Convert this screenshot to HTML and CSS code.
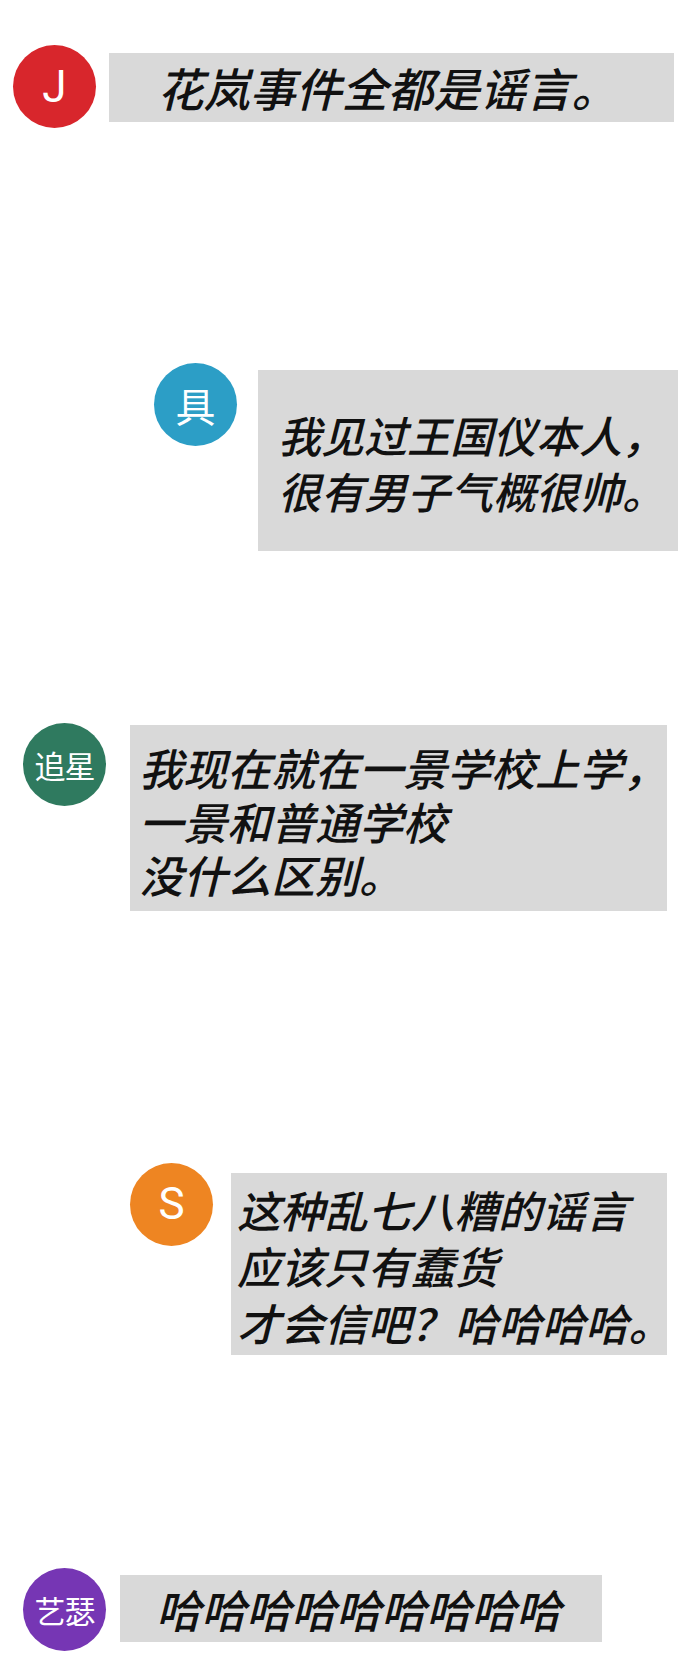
FILE: index.html
```html
<!DOCTYPE html>
<html lang="zh-CN">
<head>
    <meta charset="UTF-8">
    <title>聊天记录</title>
    <link rel="stylesheet" href="styles.css">
</head>
<body>

<div class="chat">
    <div class="msg msg-1">
        <div class="avatar red">J</div>
        <div class="bubble">
            <div class="line">花岚事件全都是谣言。</div>
        </div>
    </div>

    <div class="msg msg-2">
        <div class="avatar blue">具</div>
        <div class="bubble">
            <div class="line">我见过王国仪本人，</div>
            <div class="line">很有男子气概很帅。</div>
        </div>
    </div>

    <div class="msg msg-3">
        <div class="avatar green small">追星</div>
        <div class="bubble">
            <div class="line">我现在就在一景学校上学，</div>
            <div class="line">一景和普通学校</div>
            <div class="line">没什么区别。</div>
        </div>
    </div>

    <div class="msg msg-4">
        <div class="avatar orange">S</div>
        <div class="bubble">
            <div class="line">这种乱七八糟的谣言</div>
            <div class="line">应该只有蠢货</div>
            <div class="line">才会信吧？哈哈哈哈。</div>
        </div>
    </div>

    <div class="msg msg-5">
        <div class="avatar purple small">艺瑟</div>
        <div class="bubble">
            <div class="line">哈哈哈哈哈哈哈哈哈</div>
        </div>
    </div>
</div>

</body>
</html>
```

FILE: styles.css
```css
body {
    margin: 0;
    background: #ffffff;
    font-family: "Noto Sans CJK SC", "Noto Sans", sans-serif;
    color: #111;
}
.chat {
    padding-top: 45px;
}
.msg {
    display: flex;
    align-items: flex-start;
}
.avatar {
    flex: none;
    width: 83px;
    height: 83px;
    border-radius: 50%;
    display: flex;
    align-items: center;
    justify-content: center;
    color: #fff;
    font-family: "Roboto", "Noto Sans CJK SC", sans-serif;
    font-size: 44px;
}
.avatar.small {
    font-family: "Noto Sans CJK SC", sans-serif;
    font-size: 31px;
    letter-spacing: -1px;
}
.red { background: #d8262c; }
.blue { background: #2c9ec6; font-family: "Noto Sans CJK SC", sans-serif; font-size: 40px; }
.green { background: #2f7a5f; }
.orange { background: #ee8522; }
.purple { background: #7636b4; }

.bubble {
    background: #d9d9d9;
    font-style: italic;
    font-weight: 500;
    white-space: nowrap;
    box-sizing: border-box;
}

.msg-1 { padding-left: 13px; gap: 13px; }
.msg-1 .bubble {
    margin-top: 8px;
    width: 565px;
    font-size: 46px;
    text-align: center;
    padding-right: 8px;
}
.msg-1 .line { height: 69px; line-height: 69px; }

.msg-2 { margin-top: 235px; padding-left: 154px; gap: 21px; }
.msg-2 .bubble {
    margin-top: 7px;
    width: 420px;
    font-size: 43px;
    padding: 36px 10px 33px 20px;
}
.msg-2 .line { height: 56px; line-height: 56px; }

.msg-3 { margin-top: 172px; padding-left: 23px; gap: 24px; }
.msg-3 .bubble {
    margin-top: 2px;
    width: 537px;
    font-size: 44px;
    padding: 16px 4px 9px 9px;
}
.msg-3 .line { height: 53.5px; line-height: 53.5px; }

.msg-4 { margin-top: 252px; padding-left: 130px; gap: 18px; }
.msg-4 .bubble {
    margin-top: 10px;
    width: 436px;
    font-size: 43.5px;
    padding: 9px 0 4px 6px;
}
.msg-4 .line { height: 56.5px; line-height: 56.5px; }

.msg-5 { margin-top: 213px; padding-left: 23px; gap: 14px; }
.msg-5 .bubble {
    margin-top: 7px;
    width: 482px;
    font-size: 45px;
    padding-left: 36px;
}
.msg-5 .line { height: 67px; line-height: 67px; }
```
